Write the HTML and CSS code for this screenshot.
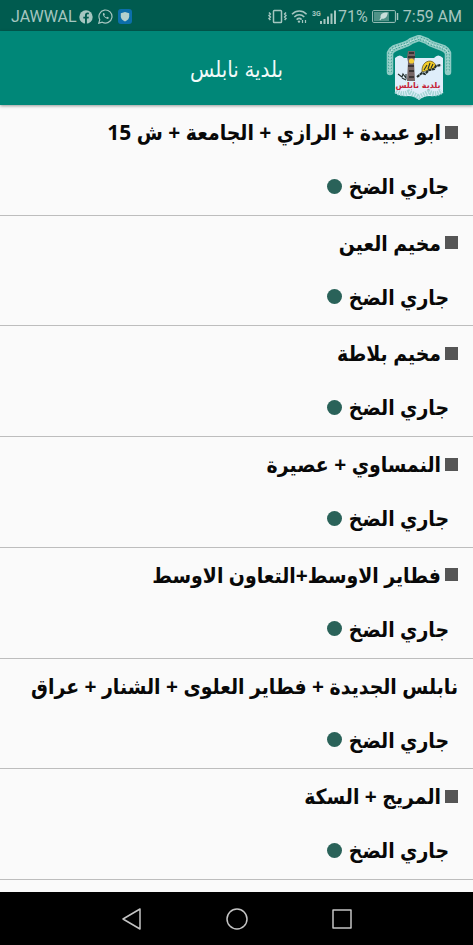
FILE: index.html
```html
<!DOCTYPE html>
<html lang="ar" dir="rtl">
<head>
<meta charset="utf-8">
<meta name="viewport" content="width=device-width, initial-scale=1">
<title>بلدية نابلس</title>
<link rel="stylesheet" href="styles.css">
</head>
<body>
<div class="status-bar" dir="ltr">
  <div class="status-group">
    <span>JAWWAL</span>
    <svg class="icon-fb" width="14" height="14" viewBox="0 0 14 14"><circle cx="7" cy="7" r="6.7" fill="#a5c6c0"/><path d="M6 14V8.6H4.3V6.7H6V5.3c0-1.8 1-2.7 2.6-2.7l1.3.1v1.6H9c-.8 0-1.1.4-1.1 1.1v1.3h2L9.600 8.600H7.900V14z" fill="#005b4f"/></svg>
    <svg class="icon-wa" width="15" height="15" viewBox="0 0 15 15" fill="none" stroke="#a5c6c0"><path d="M.8 14.2l1-3.500A6.500 6.500 0 1 1 4.300 13.200z" stroke-width="1.200"/><path d="M5.300 4.100c-1.900 1.600 2.900 7.200 5.300 5.500l.2-1.100-1.600-.8-.9.9c-1-.4-1.600-1.100-2.100-2l.7-.8-.7-1.700z" fill="#a5c6c0" stroke="none"/></svg>
    <svg class="icon-shield" width="14" height="15" viewBox="0 0 14 15"><rect width="14" height="15" rx="3" fill="#0c6eaa"/><path d="M7 3l4.200 1.300v3.200c0 2.200-1.800 3.900-4.200 4.900-2.400-1-4.200-2.700-4.200-4.900V4.300z" fill="#b4d0cd"/></svg>
  </div>
  <div class="status-group status-system">
    <svg class="icon-vibrate" width="19" height="15" viewBox="0 0 19 15" fill="none" stroke="#a5c6c0" stroke-width="1.500"><rect x="5.500" y="1.500" width="8" height="12" rx=".8"/><path d="M1 3.500l1.400 1.500L1 6.500 2.400 8 1 9.500 2.400 11M18 3.500l-1.400 1.500L18 6.500 16.600 8 18 9.500 16.600 11"/></svg>
    <svg class="icon-wifi" width="17" height="15" viewBox="0 0 17 15" fill="none" stroke="#a5c6c0" stroke-width="1.600"><path d="M1 5.200c4.200-4.200 10.400-4.200 14.600 0M3.300 8c3-2.800 7-2.800 10 0M5.600 10.600c1.600-1.400 3.600-1.400 5 0"/><circle cx="8" cy="12.600" r="1.200" fill="#a5c6c0" stroke="none"/><path d="M11.500 11v3M14.500 11v3" stroke-width="1.200"/></svg>
    <svg class="icon-signal" width="25" height="15" viewBox="0 0 25 15" fill="#a5c6c0"><text class="network" x="0" y="7">3G</text><path d="M8 12h2v3H8zM11.500 10h2v5h-2zM15 7.500h2V15h-2zM18.500 4.500h2V15h-2zM22 1.500h2V15h-2z"/></svg>
    <span>71%</span>
    <svg class="icon-battery" width="27" height="13" viewBox="0 0 27 13"><rect x=".6" y=".6" width="22.800" height="11.800" rx="1" fill="#005b4f" stroke="#a5c6c0"/><path d="M2 2h15v9H2z" fill="#4f9287"/><path d="M25.500 3v7" stroke="#a5c6c0" stroke-width="1.500"/><path d="M15.800 2.500c-5-.2-7.900 1.300-7.200 5.300L7.500 9.800l.8.500 1.400-1.600c4 .4 5.600-2 6.100-6.200z" fill="#c9dfdb"/></svg>
    <span>7:59 AM</span>
  </div>
</div>
<header class="app-bar">
  <svg class="logo" width="68" height="66" viewBox="0 0 68 66">
    <path d="M5 37V18C8 10 20 12 26 6l8-3 8 3c6 6 18 4 21 12v19" fill="none" stroke="#8fccc5" stroke-width="6.500" stroke-linejoin="round" stroke-linecap="round"/>
    <path d="M5 37V18C8 10 20 12 26 6l8-3 8 3c6 6 18 4 21 12v19" fill="none" stroke="#3f9f92" stroke-width="3.500" stroke-dasharray="1.200 1.800"/>
    <path d="M5 37V18C8 10 20 12 26 6l8-3 8 3c6 6 18 4 21 12v19" fill="none" stroke="#c4e4e1" stroke-width="1.200" stroke-dasharray="2 1"/>
    <path d="M10 23q5-5 9 0h30q4-5 9 0v35q-6 4-13 3-7 0-11 4-4-4-11-4-7 1-13-3z" fill="#dfeefa"/>
    <path d="M11 56q6 5 13 1l10 5 10-5q7 4 13-1" fill="none" stroke="#a5d5d5" stroke-width="5" stroke-dasharray="1.500 1"/>
    <path d="M23 16h7v6l-1 5 1 19h-8l1-19-1-5z" fill="#756565"/>
    <path d="M24 18h5M23 22h7M23 31h6M24 36h5M24 42h5" stroke="#262525" stroke-width="1.500"/>
    <circle cx="26.500" cy="26" r="2.600" fill="#f3cc37"/>
    <path d="M37 37c-1-13 13-14 14-5l-7 3z" fill="#f3cc27" stroke="#51481d" stroke-width=".7"/>
    <path d="M32 42l5-4 3 1 4-4 5-1 2-3 5-1" fill="none" stroke="#24302d" stroke-width="2.200" stroke-dasharray="3 .6"/>
    <path d="M39 35l3-5M43 34l2-6M46 33l2-4M13 39l4 3 1-3 3 4v-4M17 43l4 2" fill="none" stroke="#24302d" stroke-width="1.100"/>
    <text class="logo-text" x="33" y="53" text-anchor="middle" direction="rtl">بلدية نابلس</text>
  </svg>
  <h1 class="title">بلدية نابلس</h1>
</header>
<main class="content">
  <ul class="areas">
    <li class="area"><h2 class="name"><span class="square"></span>ابو عبيدة + الرازي + الجامعة + ش 15</h2><p class="state">جاري الضخ<span class="dot"></span></p></li>
    <li class="area"><h2 class="name"><span class="square"></span>مخيم العين</h2><p class="state">جاري الضخ<span class="dot"></span></p></li>
    <li class="area"><h2 class="name"><span class="square"></span>مخيم بلاطة</h2><p class="state">جاري الضخ<span class="dot"></span></p></li>
    <li class="area"><h2 class="name"><span class="square"></span>النمساوي + عصيرة</h2><p class="state">جاري الضخ<span class="dot"></span></p></li>
    <li class="area"><h2 class="name"><span class="square"></span>فطاير الاوسط+التعاون الاوسط</h2><p class="state">جاري الضخ<span class="dot"></span></p></li>
    <li class="area"><h2 class="name">نابلس الجديدة + فطاير العلوى + الشنار + عراق</h2><p class="state">جاري الضخ<span class="dot"></span></p></li>
    <li class="area"><h2 class="name"><span class="square"></span>المريج + السكة</h2><p class="state">جاري الضخ<span class="dot"></span></p></li>
  </ul>
</main>
<nav class="nav-bar" dir="ltr">
  <button class="nav-button" aria-label="رجوع"><svg width="24" height="24" viewBox="0 0 24 24"><path d="M20 2v20L3 12z"/></svg></button>
  <button class="nav-button" aria-label="الرئيسية"><svg width="24" height="24" viewBox="0 0 24 24"><circle cx="12" cy="12" r="10"/></svg></button>
  <button class="nav-button" aria-label="التطبيقات"><svg width="24" height="24" viewBox="0 0 24 24"><rect x="3" y="3" width="18" height="18"/></svg></button>
</nav>
</body>
</html>
```
FILE: styles.css
```css
* { box-sizing: border-box; }
body {
  margin: 0;
  min-height: 100vh;
  display: flex;
  flex-direction: column;
  background: #fafafa;
  color: #080808;
  font-family: "Open Sans", "DejaVu Sans Condensed", "DejaVu Sans", sans-serif;
}
svg { display: block; flex: none; }
.status-bar {
  height: 31px;
  display: flex;
  align-items: center;
  justify-content: space-between;
  padding: 2px 11px 0;
  background: #005b4f;
  color: #a5c6c0;
  font: 16px/20px Roboto, sans-serif;
  white-space: nowrap;
}
.status-group { display: flex; align-items: center; gap: 3px; }
.status-system { gap: 4px; }
.icon-fb { margin-left: -1px; }
.icon-wa { margin-left: 2px; }
.icon-shield { margin-left: 2px; }
.icon-signal { margin-right: -3px; }
.network { font-size: 7px; font-weight: 700; }
.app-bar {
  height: 74px;
  display: grid;
  grid-template-columns: 1fr auto 1fr;
  align-items: center;
  padding: 0 20px;
  background: #008778;
  box-shadow: 0 1px 3px rgba(0, 0, 0, .4);
}
.title {
  margin: 0;
  color: #f2faf9;
  font-size: 22px;
  font-weight: 400;
  line-height: 28px;
}
.logo-text {
  fill: #c52035;
  font: 700 8px "DejaVu Sans", sans-serif;
}
.content {
  flex: 1;
  display: flex;
  padding-bottom: 12px;
}
.areas {
  flex: 1;
  min-width: 0;
  display: grid;
  grid-auto-rows: 1fr;
  margin: 0;
  padding: 0;
  list-style: none;
}
.area {
  display: flex;
  flex-direction: column;
  gap: 24px;
  padding: 12px 15px 0;
  border-bottom: 1px solid #bdbdbd;
}
.name, .state {
  display: flex;
  align-items: center;
  margin: 0;
  font-size: 21px;
  font-weight: 700;
  line-height: 30px;
  white-space: nowrap;
}
.name { gap: 4px; }
.state { gap: 7px; padding-right: 9px; }
.square { width: 13px; height: 13px; background: #555; }
.dot { width: 15px; height: 15px; border-radius: 50%; background: #2a6259; }
.nav-bar {
  height: 53px;
  display: flex;
  align-items: center;
  justify-content: center;
  gap: 81px;
  background: #000;
}
.nav-button {
  padding: 0;
  border: 0;
  background: none;
}
.nav-button svg {
  fill: none;
  stroke: #c4c4c4;
  stroke-width: 1.5;
  stroke-linejoin: round;
}
```
